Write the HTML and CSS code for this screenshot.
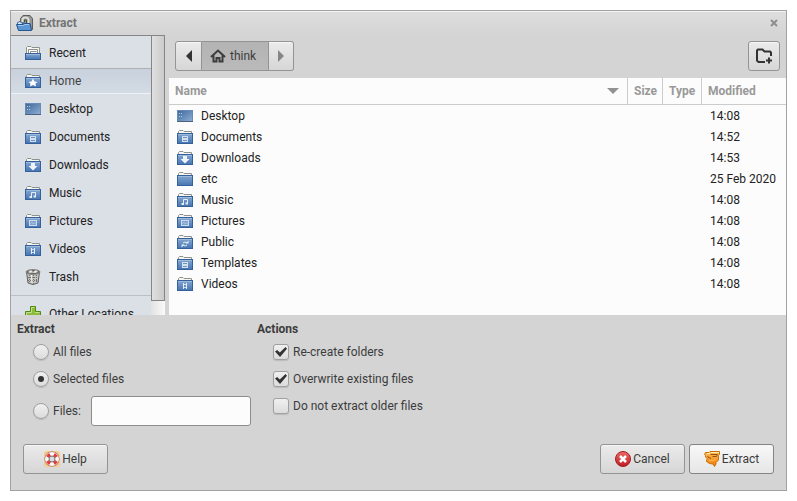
FILE: index.html
```html
<!DOCTYPE html>
<html lang="en">
<head>
  <meta charset="UTF-8" />
  <meta name="viewport" content="width=device-width, initial-scale=1.0"/>
  <title>Extract</title>
  <link rel="stylesheet" href="styles.css">
</head>
<body>
  <!-- Shared icons -->
  <svg class="sprite" aria-hidden="true">
    <defs>
      <linearGradient id="blue" x1="0" y1="0" x2="0" y2="1">
        <stop offset="0" stop-color="#86a8d2"/>
        <stop offset="1" stop-color="#4675b2"/>
      </linearGradient>
      <linearGradient id="screen" x1="0" y1="0" x2="1" y2="1">
        <stop offset="0" stop-color="#3e6697"/>
        <stop offset="1" stop-color="#8db0d6"/>
      </linearGradient>
      <linearGradient id="red" x1="0" y1="0" x2="0" y2="1">
        <stop offset="0" stop-color="#ec6b6b"/>
        <stop offset="1" stop-color="#bd1c20"/>
      </linearGradient>
      <linearGradient id="orange" x1="0" y1="0" x2="0" y2="1">
        <stop offset="0" stop-color="#fbc05a"/>
        <stop offset="1" stop-color="#f57900"/>
      </linearGradient>
    </defs>
    <symbol id="folder" viewBox="0 0 16 16">
      <path d="M1.5 6V2.500L2.500 1.500H6L7 2.500H14.500V6" fill="#f6f6f3" stroke="#8f918c"/>
      <rect x="0.5" y="4.500" width="15" height="10" fill="url(#blue)" stroke="#34619c"/>
      <path d="M1 5.500H15" stroke="#9dbadc"/>
    </symbol>
    <symbol id="recent" viewBox="0 0 16 16">
      <path d="M1.5 9V2.500L2.500 1.500H6L7 2.500H14.500V9" fill="#f6f6f3" stroke="#8f918c"/>
      <path d="M3.500 9V4.500H12.500V9M5.500 9V6.500H11.500" fill="#fff" stroke="#8f918c"/>
      <rect x="0.5" y="8.500" width="15" height="6" fill="url(#blue)" stroke="#34619c"/>
      <path d="M1 9.500H15" stroke="#9dbadc"/>
    </symbol>
    <symbol id="home" viewBox="0 0 16 16">
      <use href="#folder"/>
      <path d="M8 5.500L9.500 8.500L12.500 9L10.500 10.500L11 13.500L8 12L5 13.500L5.500 10.500L3.500 9L6.500 8.500Z" fill="#fff"/>
    </symbol>
    <symbol id="desktop" viewBox="0 0 16 16">
      <rect x="0.5" y="2.500" width="15" height="11" fill="url(#screen)" stroke="#658bb8"/>
      <path d="M2 5.500H3M2 8.500H3M4 5.500H5M4 8.500H5" stroke="#b5cce5"/>
      <path d="M0 13.500H16" stroke="#4c6280"/>
    </symbol>
    <symbol id="documents" viewBox="0 0 16 16">
      <use href="#folder"/>
      <path d="M5 7H11V13H5Z" fill="#d3e0f0"/>
      <path d="M6 8.500H10M6 11.500H10" stroke="#6b93c6"/>
    </symbol>
    <symbol id="downloads" viewBox="0 0 16 16">
      <use href="#folder"/>
      <path d="M6 6H10V9H12.500L8 13.500L3.500 9H6Z" fill="#eff4fa"/>
    </symbol>
    <symbol id="music" viewBox="0 0 16 16">
      <use href="#folder"/>
      <path d="M6.500 12V7.500H10.500V11" fill="none" stroke="#e6eef7"/>
      <path d="M4.500 11H7V13H4.500ZM8.500 10.500H11V12.500H8.500Z" fill="#e6eef7"/>
    </symbol>
    <symbol id="pictures" viewBox="0 0 16 16">
      <use href="#folder"/>
      <rect x="4.500" y="7.500" width="7" height="5" fill="#7fa2ce" stroke="#ccdbed"/>
      <path d="M5 11L7 9L8 11L10 9.500L11 11" fill="none" stroke="#a9c1de"/>
    </symbol>
    <symbol id="videos" viewBox="0 0 16 16">
      <use href="#folder"/>
      <path d="M6.500 7V13M9.500 7V13" stroke="#e6eef7"/>
      <path d="M7 8.500H9M7 11.500H9" stroke="#ccdbed"/>
    </symbol>
    <symbol id="public" viewBox="0 0 16 16">
      <use href="#folder"/>
      <path d="M6 9Q8 7 10 9M10 11Q8 13 6 11" fill="none" stroke="#e6eef7"/>
      <path d="M8.500 9.500H11.500V6.500ZM7.500 10.500H4.500V13.500Z" fill="#e6eef7"/>
    </symbol>
    <symbol id="trash" viewBox="0 0 16 16">
      <path d="M1.500 3L3 14Q8 17 13 14L14.500 3Z" fill="#c3c3bf" stroke="#62635f"/>
      <path d="M4.500 6V14M8.500 6V15M11.500 6V14M3 8.500H13M3 11.500H13" stroke="#72736f" stroke-dasharray="1 1"/>
      <path d="M6.500 6L7 14" stroke="#f4f4f2"/>
      <ellipse cx="8" cy="3" rx="7" ry="2.500" fill="#6a6b67" stroke="#8a8b87"/>
      <path d="M3 3L6 1L8 3L11 1L13 3L10 4L7 3.500L5 4Z" fill="#e5e5e2"/>
    </symbol>
    <symbol id="plus" viewBox="0 0 16 16">
      <path d="M5.500 0.500H10.500V5.500H15.500V10.500H10.500V15.500H5.500V10.500H0.500V5.500H5.500Z" fill="#8dbb3c" stroke="#4e8a12"/>
      <path d="M6.500 6.500V1.500H9.500M1.500 9V6.500H6.500M10 6.500H14.500" fill="none" stroke="#c5e08c"/>
    </symbol>
  </svg>

  <div class="window">
    <header class="titlebar">
      <svg class="app-icon" viewBox="0 0 17 16" aria-hidden="true">
        <path d="M4.500 3.500L7 0.500H14L16.500 3.500V14.500H9V8H4.500Z" fill="#95968f" stroke="#5c5d59"/>
        <path d="M6.500 7V4.500Q7 2.500 9.500 2.500Q12.500 2.500 12.500 5V9" fill="none" stroke="#dcdcd8" stroke-width="2"/>
        <path d="M8.500 7V5H10.500V9" fill="none" stroke="#4b4c49"/>
        <path d="M1.500 10V7.500L4 6.500L6 8.500H10V12H2Z" fill="#dfe9f5" stroke="#3c6eaa"/>
        <path d="M0.500 9.500H7L9 8.500H14L15.500 15.500H2.500Z" fill="#5c96d5" stroke="#205493"/>
        <path d="M2 10.500H7L9 9.500H13" fill="none" stroke="#a5c6ea"/>
      </svg>
      <h1>Extract</h1>
      <button class="close" aria-label="Close">
        <svg viewBox="0 0 8 8"><path d="M1 1L7 7M7 1L1 7" stroke="#8e8e8e" stroke-width="2"/></svg>
      </button>
    </header>

    <main class="chooser">
      <!-- Places -->
      <div class="places">
        <nav>
          <a href="#"><svg class="icon"><use href="#recent"/></svg>Recent</a>
          <a href="#" class="current"><svg class="icon"><use href="#home"/></svg>Home</a>
          <a href="#"><svg class="icon"><use href="#desktop"/></svg>Desktop</a>
          <a href="#"><svg class="icon"><use href="#documents"/></svg>Documents</a>
          <a href="#"><svg class="icon"><use href="#downloads"/></svg>Downloads</a>
          <a href="#"><svg class="icon"><use href="#music"/></svg>Music</a>
          <a href="#"><svg class="icon"><use href="#pictures"/></svg>Pictures</a>
          <a href="#"><svg class="icon"><use href="#videos"/></svg>Videos</a>
          <a href="#"><svg class="icon"><use href="#trash"/></svg>Trash</a>
          <hr>
          <a href="#"><svg class="icon"><use href="#plus"/></svg>Other Locations</a>
        </nav>
        <div class="scrollbar"><div class="thumb"></div></div>
      </div>

      <!-- Path bar and file list -->
      <div class="browser">
        <div class="toolbar">
          <div class="pathbar">
            <button class="back" aria-label="Back"><svg width="6" height="12" viewBox="0 0 6 12"><path d="M6 0V12L0 6Z" fill="#333"/></svg></button>
            <button class="active">
              <svg width="16" height="14" viewBox="0 0 16 14"><path d="M1 8L8 1.500L15 8M3.500 6.500V12.500H6.500V9H9.500V12.500H12.500V6.500" fill="none" stroke="#3c3c3c" stroke-width="2"/></svg>
              think
            </button>
            <button class="forward" aria-label="Forward"><svg width="6" height="12" viewBox="0 0 6 12"><path d="M0 0V12L6 6Z" fill="#858585"/></svg></button>
          </div>
          <button class="new-folder" aria-label="Create Folder">
            <svg width="16" height="16" viewBox="0 0 16 16"><path d="M9 14H2.500L1 12.500V2.500L2 1.500H6.500L8.500 3.500H14L15 4.500V8" fill="none" stroke="#333" stroke-width="2"/><path d="M13 9.500V15.500M10 12.500H16" stroke="#333" stroke-width="2"/></svg>
          </button>
        </div>
        <div class="files">
          <table>
            <thead>
              <tr>
                <th class="name"><div class="sort">Name <svg width="12" height="6" viewBox="0 0 12 6"><path d="M0 0H12L6 6Z" fill="#929292"/></svg></div></th>
                <th class="size">Size</th>
                <th class="type">Type</th>
                <th class="modified">Modified</th>
              </tr>
            </thead>
            <tbody>
              <tr><td><div class="file"><svg class="icon"><use href="#desktop"/></svg>Desktop</div></td><td></td><td></td><td>14:08</td></tr>
              <tr><td><div class="file"><svg class="icon"><use href="#documents"/></svg>Documents</div></td><td></td><td></td><td>14:52</td></tr>
              <tr><td><div class="file"><svg class="icon"><use href="#downloads"/></svg>Downloads</div></td><td></td><td></td><td>14:53</td></tr>
              <tr><td><div class="file"><svg class="icon"><use href="#folder"/></svg>etc</div></td><td></td><td></td><td>25 Feb 2020</td></tr>
              <tr><td><div class="file"><svg class="icon"><use href="#music"/></svg>Music</div></td><td></td><td></td><td>14:08</td></tr>
              <tr><td><div class="file"><svg class="icon"><use href="#pictures"/></svg>Pictures</div></td><td></td><td></td><td>14:08</td></tr>
              <tr><td><div class="file"><svg class="icon"><use href="#public"/></svg>Public</div></td><td></td><td></td><td>14:08</td></tr>
              <tr><td><div class="file"><svg class="icon"><use href="#documents"/></svg>Templates</div></td><td></td><td></td><td>14:08</td></tr>
              <tr><td><div class="file"><svg class="icon"><use href="#videos"/></svg>Videos</div></td><td></td><td></td><td>14:08</td></tr>
            </tbody>
          </table>
        </div>
      </div>
    </main>

    <!-- Extraction options -->
    <div class="options">
      <section class="option-group">
        <h2>Extract</h2>
        <label><input type="radio" name="which">All files</label>
        <label><input type="radio" name="which" checked>Selected files</label>
        <div class="pattern">
          <label><input type="radio" name="which">Files:</label>
          <input type="text" aria-label="File pattern">
        </div>
      </section>
      <section class="option-group">
        <h2>Actions</h2>
        <label><input type="checkbox" checked>Re-create folders</label>
        <label><input type="checkbox" checked>Overwrite existing files</label>
        <label><input type="checkbox">Do not extract older files</label>
      </section>
    </div>

    <footer class="buttons">
      <button class="help">
        <svg class="icon" viewBox="0 0 16 16">
          <rect width="16" height="16" rx="3" fill="#f0cd8c"/>
          <circle cx="8" cy="8" r="5" fill="none" stroke="#a34a4a" stroke-width="5"/>
          <circle cx="8" cy="8" r="5" fill="none" stroke="#fafafa" stroke-width="4"/>
          <path d="M2 5L5 2L7 5L5 7ZM11 2L14 5L11 7L9 5ZM2 11L5 9L7 11L5 14ZM9 11L11 9L14 11L11 14Z" fill="#e33b3b"/>
          <circle cx="8" cy="8" r="3" fill="#dadada" stroke="#777"/>
        </svg>
        Help
      </button>
      <button>
        <svg class="icon" viewBox="0 0 16 16">
          <circle cx="8" cy="8" r="7.500" fill="url(#red)" stroke="#a61d20"/>
          <path d="M5 5L11 11M11 5L5 11" stroke="#fff" stroke-width="2.500"/>
        </svg>
        Cancel
      </button>
      <button class="default">
        <svg class="icon" viewBox="0 0 16 16">
          <path d="M1.500 1.500H5L6 0.500H15.500V3.500L14.500 4.500V9L12 11.500V13L10.500 15.500L9 13L5.500 12.500L2.500 10.500V9L3.500 8L1.500 6V4.500L0.500 3.500Z" fill="url(#orange)" stroke="#c96f0c"/>
          <path d="M7 1.500H15M3 2.500H6" stroke="#fdeeb0"/>
          <path d="M6.500 3.500H13.500L12.500 5.500H8.500M3.500 5L5 7H7" fill="none" stroke="#9a5208"/>
          <path d="M5 9.500H9L12 8" fill="none" stroke="#fcb95a"/>
        </svg>
        Extract
      </button>
    </footer>
  </div>
</body>
</html>
```

FILE: styles.css
```css
* {
  box-sizing: border-box;
}

body {
  margin: 0;
  padding: 10px;
  height: 100vh;
  background: #fff;
  color: #3c3c3c;
  font-family: Roboto, "Liberation Sans", sans-serif;
  font-size: 12px;
  line-height: 16px;
}

button,
input {
  font: inherit;
  color: inherit;
  margin: 0;
}

.sprite {
  display: block;
  width: 0;
  height: 0;
}

.icon {
  width: 16px;
  height: 16px;
  flex: none;
}

.window {
  height: 100%;
  display: flex;
  flex-direction: column;
  background: #d4d4d4;
  border: 1px solid #a2a2a2;
}

/* Title bar */
.titlebar {
  flex: none;
  height: 24px;
  display: flex;
  align-items: center;
  gap: 6px;
  padding: 0 8px 2px 5px;
  background: linear-gradient(#dedede, #d4d4d4);
  border-top: 1px solid #f4f4f4;
}

.titlebar h1 {
  flex: 1;
  margin: 0;
  font-size: 12px;
  color: #747474;
}

.app-icon {
  width: 17px;
  height: 16px;
}

.close {
  display: flex;
  padding: 0;
  border: none;
  background: none;
}

.close svg {
  width: 8px;
  height: 8px;
}

/* Places sidebar */
.chooser {
  flex: 1;
  min-height: 0;
  display: flex;
  gap: 4px;
}

.places {
  width: 154px;
  display: flex;
  overflow: hidden;
}

nav {
  flex: 1;
  padding-top: 3px;
  background: #dbdfe6;
  border-top: 1px solid #858585;
}

nav a {
  height: 28px;
  display: flex;
  align-items: center;
  gap: 8px;
  padding-left: 14px;
  color: #222;
  text-decoration: none;
  white-space: nowrap;
}

nav .current {
  height: 26px;
  margin: 1px 0;
  color: #444;
  background: linear-gradient(#c8d1dc, #d3dbe4);
  border-top: 1px solid #b0b0b0;
  border-bottom: 1px solid #eef2f6;
}

nav hr {
  margin: 4px 0;
  border: none;
  border-top: 1px solid #bcbfc5;
}

.scrollbar {
  width: 14px;
  background: linear-gradient(to right, #e2e2e2, #fafafa);
}

.thumb {
  height: 95%;
  background: linear-gradient(to right, #e0e0e0, #cbcbcb);
  border: 1px solid #858585;
}

/* Buttons */
button {
  height: 30px;
  display: flex;
  align-items: center;
  justify-content: center;
  gap: 2px;
  padding: 0;
  background: linear-gradient(#ebebeb, #d6d6d6);
  border: 1px solid #949494;
  border-radius: 3px;
  box-shadow: inset 0 1px #f6f6f6;
}

.titlebar button {
  height: auto;
  box-shadow: none;
}

/* File browser */
.browser {
  flex: 1;
  display: flex;
  flex-direction: column;
}

.toolbar {
  display: flex;
  justify-content: space-between;
  padding: 6px 6px 7px;
}

.pathbar {
  display: flex;
}

.pathbar .back {
  width: 27px;
  border-radius: 3px 0 0 3px;
}

.pathbar .active {
  gap: 4px;
  padding: 0 12px 0 8px;
  background: linear-gradient(#b3b3b3, #bababa);
  border-left: none;
  border-radius: 0;
  box-shadow: none;
}

.pathbar .forward {
  width: 25px;
  border-left: none;
  border-radius: 0 3px 3px 0;
}

.new-folder {
  width: 32px;
}

.files {
  flex: 1;
  background: #fcfcfc;
}

table {
  width: 100%;
  table-layout: fixed;
  border-collapse: separate;
  border-spacing: 0;
  color: #222;
}

th {
  height: 27px;
  padding: 0 0 0 6px;
  color: #999;
  text-align: left;
  border-right: 1px solid #ccc;
  border-bottom: 1px solid #ccc;
}

th:last-child {
  border-right: none;
}

.size {
  width: 35px;
}

.type {
  width: 39px;
}

.modified {
  width: 84px;
}

.sort {
  display: flex;
  align-items: center;
  justify-content: space-between;
  padding-right: 8px;
}

td {
  height: 21px;
  padding: 0 0 0 8px;
  white-space: nowrap;
}

.file {
  display: flex;
  align-items: center;
  gap: 8px;
}

/* Extraction options */
.options {
  display: flex;
  gap: 6px;
  padding: 4px 6px 0;
}

.option-group {
  width: 234px;
}

.option-group h2 {
  margin: 0;
  font-size: 12px;
  line-height: 20px;
}

.option-group label {
  height: 27px;
  display: flex;
  align-items: center;
  gap: 4px;
  padding: 0 0 1px 16px;
}

.pattern {
  height: 36px;
  display: flex;
  align-items: center;
  justify-content: space-between;
}

input[type="text"] {
  width: 160px;
  height: 30px;
  padding: 0 6px;
  background: #fcfcfc;
  border: 1px solid #8c8c8c;
  border-radius: 3px;
}

input[type="radio"],
input[type="checkbox"] {
  appearance: none;
  width: 16px;
  height: 16px;
  display: grid;
  place-items: center;
  background: linear-gradient(#f0f0f0, #dcdcdc);
  border: 1px solid #a0a0a0;
  border-radius: 3px;
  box-shadow: 0 1px 1px #bbb;
}

input[type="radio"] {
  border-radius: 50%;
}

input[type="radio"]:checked::after {
  content: "";
  width: 6px;
  height: 6px;
  background: #333;
  border-radius: 50%;
}

input[type="checkbox"]:checked::after {
  content: "";
  width: 12px;
  height: 10px;
  background: #333;
  clip-path: polygon(0 45%, 18% 30%, 40% 55%, 88% 0, 100% 18%, 42% 100%);
}

/* Dialog buttons */
.buttons {
  display: flex;
  gap: 4px;
  padding: 15px 12px 16px;
}

.buttons button {
  width: 85px;
}

.buttons .help {
  margin-right: auto;
}

.buttons .default {
  background: linear-gradient(#f8f8f8, #e6e6e6);
  border-color: #858585;
}
```
